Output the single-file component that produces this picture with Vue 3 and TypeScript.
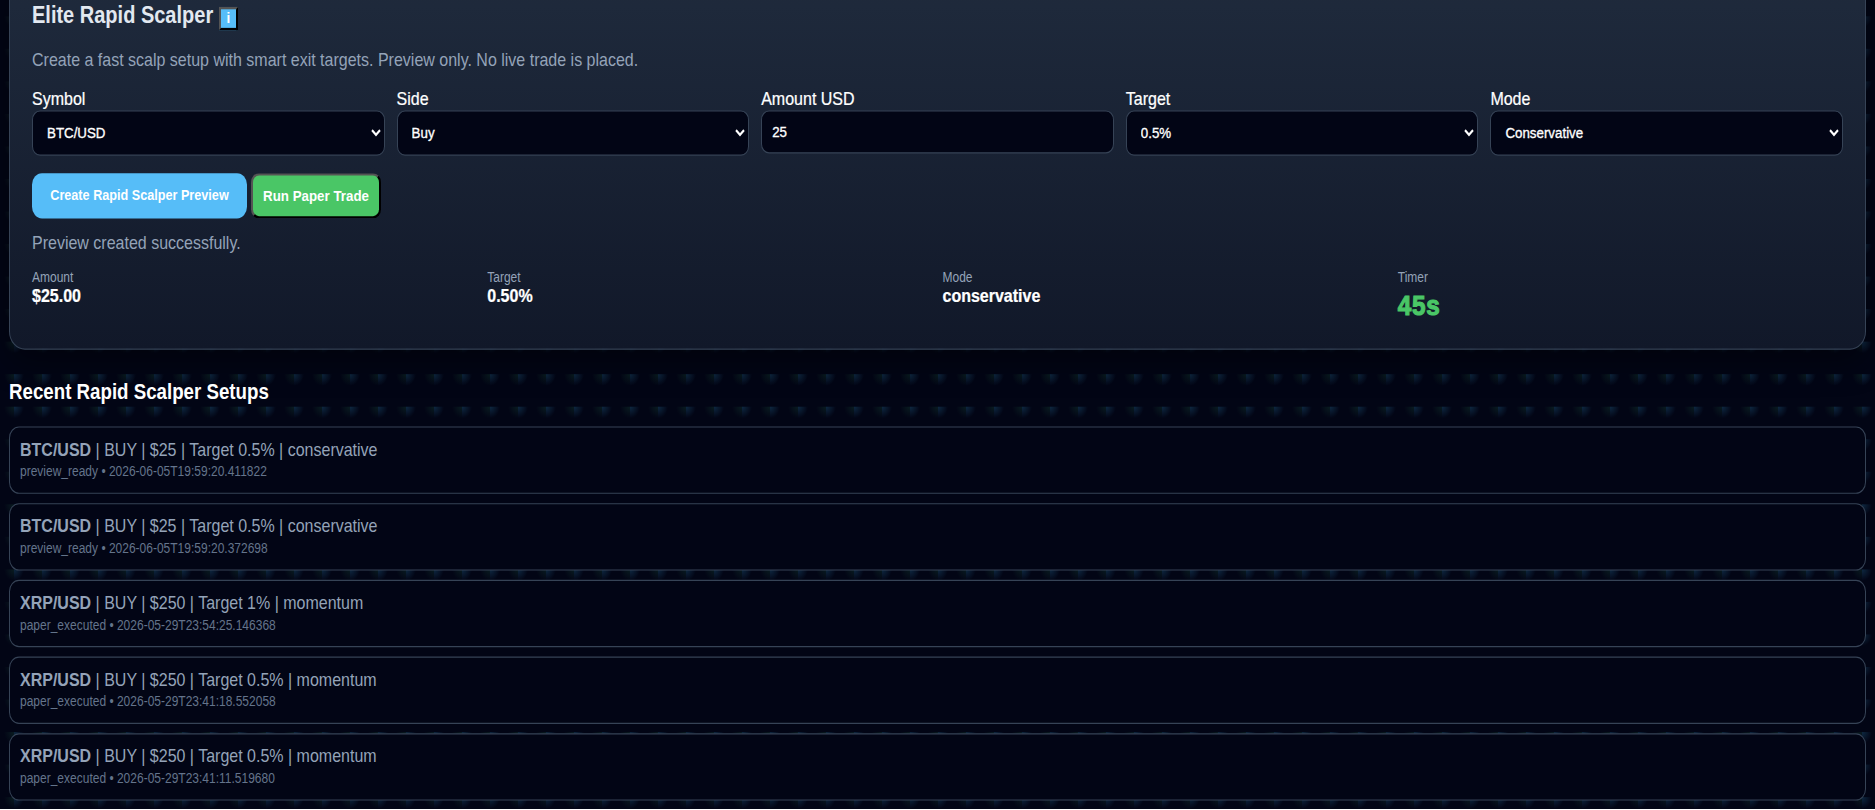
<script setup lang="ts">
interface Field { label: string; value: string; kind: 'select' | 'input' }
interface Setup { symbol: string; detail: string; meta: string }

const fields: Field[] = [
  { label: 'Symbol', value: 'BTC/USD', kind: 'select' },
  { label: 'Side', value: 'Buy', kind: 'select' },
  { label: 'Amount USD', value: '25', kind: 'input' },
  { label: 'Target', value: '0.5%', kind: 'select' },
  { label: 'Mode', value: 'Conservative', kind: 'select' },
]
const metrics = [
  { label: 'Amount', value: '$25.00' },
  { label: 'Target', value: '0.50%' },
  { label: 'Mode', value: 'conservative' },
  { label: 'Timer', value: '45s', timer: true },
]
const setups: Setup[] = [
  { symbol: 'BTC/USD', detail: 'BUY | $25 | Target 0.5% | conservative', meta: 'preview_ready • 2026-06-05T19:59:20.411822' },
  { symbol: 'BTC/USD', detail: 'BUY | $25 | Target 0.5% | conservative', meta: 'preview_ready • 2026-06-05T19:59:20.372698' },
  { symbol: 'XRP/USD', detail: 'BUY | $250 | Target 1% | momentum', meta: 'paper_executed • 2026-05-29T23:54:25.146368' },
  { symbol: 'XRP/USD', detail: 'BUY | $250 | Target 0.5% | momentum', meta: 'paper_executed • 2026-05-29T23:41:18.552058' },
  { symbol: 'XRP/USD', detail: 'BUY | $250 | Target 0.5% | momentum', meta: 'paper_executed • 2026-05-29T23:41:11.519680' },
]
</script>

<template>
  <div class="viewport">
    <main class="page">
      <section class="panel">
        <h2>Elite Rapid Scalper <button class="info">i</button></h2>
        <p class="desc">Create a fast scalp setup with smart exit targets. Preview only. No live trade is placed.</p>
        <div class="fields">
          <label v-for="f in fields" :key="f.label">
            <span>{{ f.label }}</span>
            <select v-if="f.kind === 'select'"><option>{{ f.value }}</option></select>
            <input v-else type="text" :value="f.value" />
          </label>
        </div>
        <div class="actions">
          <button class="create">Create Rapid Scalper Preview</button>
          <button class="paper">Run Paper Trade</button>
        </div>
        <p class="status">Preview created successfully.</p>
        <div class="metrics">
          <div v-for="m in metrics" :key="m.label">
            <div class="caption">{{ m.label }}</div>
            <div :class="m.timer ? 'timer' : 'value'">{{ m.value }}</div>
          </div>
        </div>
      </section>
      <h3>Recent Rapid Scalper Setups</h3>
      <article v-for="(s, i) in setups" :key="i" class="setup">
        <div class="line"><b>{{ s.symbol }}</b> | {{ s.detail }}</div>
        <div class="meta">{{ s.meta }}</div>
      </article>
    </main>
  </div>
</template>

<style>
body { margin: 0; overflow: hidden; background: #fff; }
</style>

<style scoped>
* { box-sizing: border-box; }
.viewport { height: 809px; overflow: hidden; }
.page {
  width: 1875px;
  height: 698px;
  padding: 0 9px;
  overflow: hidden;
  transform: scaleY(1.162);
  transform-origin: 0 0;
  font: 16px/18px "Liberation Sans", Arial, sans-serif;
  color: #fff;
  background:
    radial-gradient(circle at 0 0, rgba(24, 70, 104, .55), transparent 10px) 14px 14px / 28px 28px,
    radial-gradient(circle at 100% 0, rgba(20, 62, 50, .4), transparent 10px) -14px 14px / 28px 28px,
    #020515;
}
.panel {
  height: 329.5px;
  margin-top: -29px;
  padding: 30px 22px 0;
  border: 1px solid #364356;
  border-radius: 16px;
  background: linear-gradient(#202a3a, #1e293b 10%, #111829);
  box-shadow: 0 10px 30px rgba(0, 0, 0, .4);
}
h2 { margin: 0; height: 22px; font-size: 20px; line-height: 22px; color: #e2e8f0; }
.info {
  width: 19px; height: 20px; padding: 0; border: 2px outset #000;
  background: #56bdf8; color: #fff; font: bold 13.333px "Liberation Sans", Arial, sans-serif;
  vertical-align: 0;
}
.desc { margin: 18.6px 0 0; color: #94a3b8; }
.fields { display: grid; grid-template-columns: repeat(5, 1fr); gap: 12px; margin-top: 15.6px; }
label { display: block; -webkit-text-stroke: .2px #fff; }
label span { display: block; height: 19px; }
select, input {
  display: block; width: 100%; margin: 0; border: 1px solid #364356; border-radius: 8px;
  background: #020515; color: #fff; padding: 10px; font: 13.333px "Liberation Sans", Arial, sans-serif;
  -webkit-text-stroke: .3px #fff;
}
select { height: 38.5px; }
input { height: 36.5px; }
.actions { display: flex; align-items: center; gap: 4px; margin-top: 15px; }
.actions button { color: #fff; font: bold 13.333px "Liberation Sans", Arial, sans-serif; padding: 0; height: 39.5px; }
.actions .create { width: 215px; border: 0; border-radius: 10px; background: #56bdf8; font-size: 12.65px; }
.paper { width: 130px; border: 2px outset #000; border-radius: 8px; background: #4ac666; }
.status { margin: 12px 0 0; color: #94a3b8; }
.metrics { display: grid; grid-template-columns: repeat(4, 1fr); gap: 10px; margin-top: 13.9px; }
.caption { color: #94a3b8; font-size: 12px; line-height: 14px; }
.value { font-weight: bold; line-height: 18px; -webkit-text-stroke: .2px #fff; }
.timer { margin-top: 1.5px; color: #4ac666; font-size: 24.3px; letter-spacing: .7px; font-weight: 900; line-height: 29px; -webkit-text-stroke: 1px #4ac666; }
h3 { margin: 25px 0 20.4px; font-size: 18.72px; line-height: 21px; }
.setup { height: 58px; margin-bottom: 8px; padding: 10px 10px 0; border: 1px solid #364356; border-radius: 10px; background: #020515; color: #94a3b8; }
.meta { color: #64748b; font-size: 12px; line-height: 14px; margin-top: 3px; }
</style>
